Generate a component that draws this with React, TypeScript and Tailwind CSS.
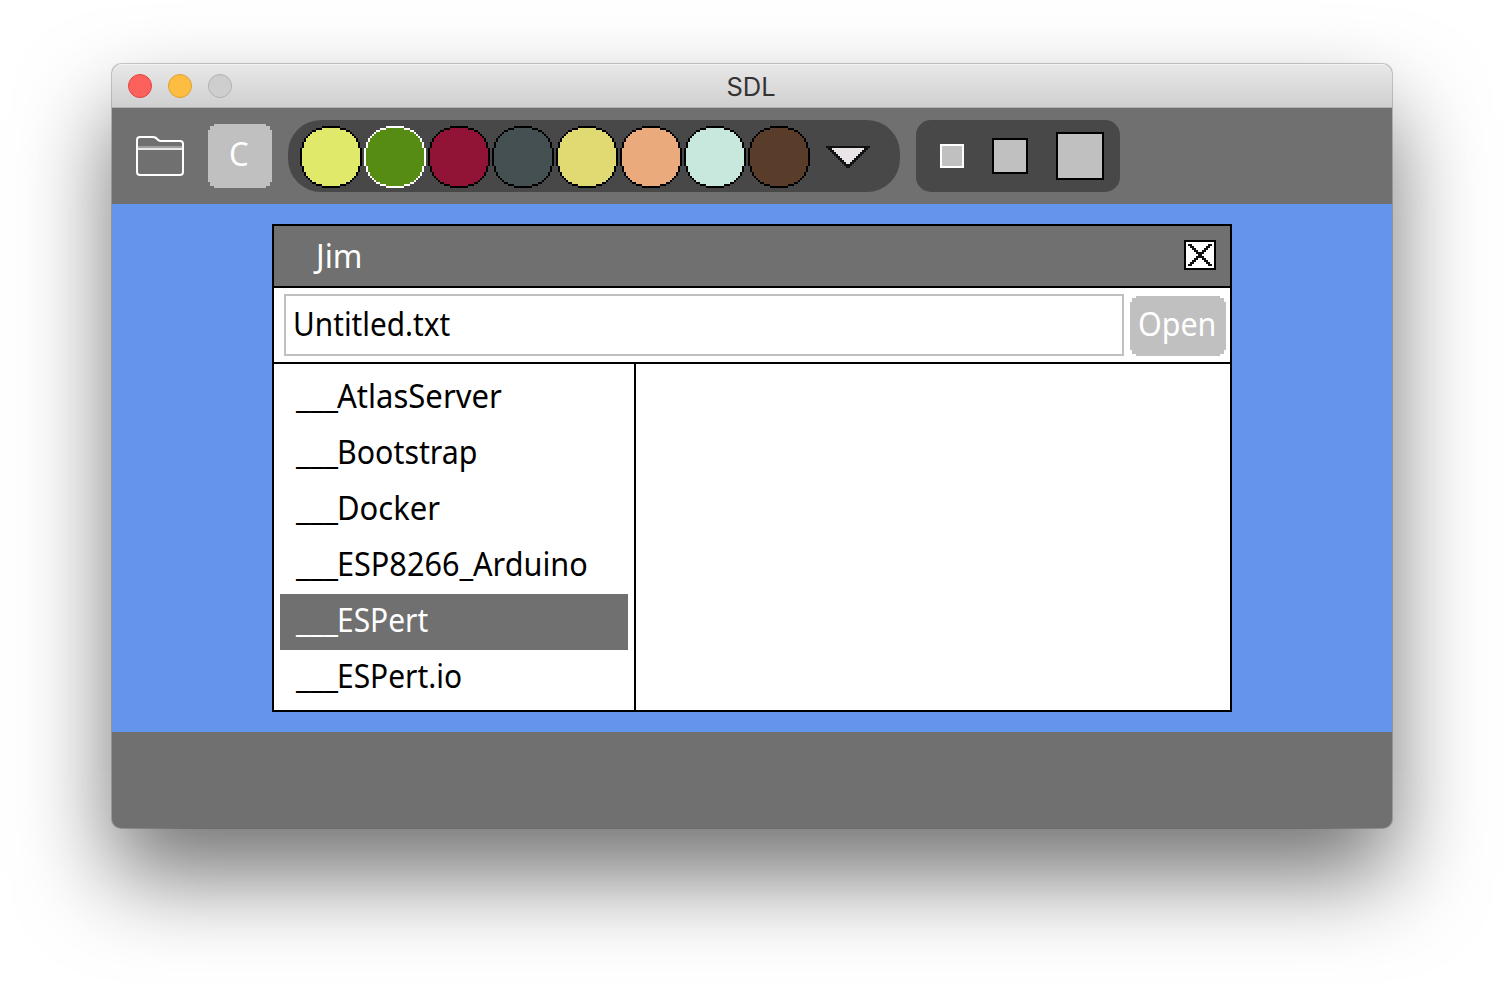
import React from "react";

const COLORS = ["#e0e96a", "#568c13", "#911436", "#445051", "#e1da73", "#eaaa7b", "#c8e8dd", "#593c2a"];

// First outline cell and outline length of each row in the upper half of a swatch.
const ROWS: [number, number][] = [
  [11, 9], [8, 3], [6, 2], [5, 1], [4, 1], [3, 1], [2, 1], [2, 1], [1, 1], [1, 1], [1, 1],
  [0, 1], [0, 1], [0, 1], [0, 1], [0, 1],
];

function Swatch({ color, selected }: { color: string; selected: boolean }) {
  const line = selected ? "#ffffff" : "#000000";
  return (
    <svg viewBox="0 0 31 31" className="size-[62px] shrink-0" shapeRendering="crispEdges">
      {Array.from({ length: 31 }, (_, y) => {
        const [start, len] = ROWS[Math.min(y, 30 - y)];
        return (
          <g key={y}>
            <rect x={start} y={y} width={31 - 2 * start} height={1} fill={line} />
            {y > 0 && y < 30 && (
              <rect x={start + len} y={y} width={31 - 2 * (start + len)} height={1} fill={color} />
            )}
          </g>
        );
      })}
    </svg>
  );
}

const FILES = [
  { name: "AtlasServer", scale: "scale-x-[0.97]" },
  { name: "Bootstrap", scale: "scale-x-[0.948]" },
  { name: "Docker", scale: "scale-x-[0.968]" },
  { name: "ESP8266_Arduino", scale: "scale-x-[0.957]" },
  { name: "ESPert", scale: "scale-x-[0.935]" },
  { name: "ESPert.io", scale: "scale-x-[0.935]" },
];

// Button corners stepped in 2px blocks.
const STEPPED =
  "[clip-path:polygon(6px_0,calc(100%-6px)_0,calc(100%-6px)_2px,calc(100%-2px)_2px,calc(100%-2px)_6px,100%_6px,100%_calc(100%-6px),calc(100%-2px)_calc(100%-6px),calc(100%-2px)_calc(100%-2px),calc(100%-6px)_calc(100%-2px),calc(100%-6px)_100%,6px_100%,6px_calc(100%-2px),2px_calc(100%-2px),2px_calc(100%-6px),0_calc(100%-6px),0_6px,2px_6px,2px_2px,6px_2px)]";

function Label({ scale = "scale-x-[0.93]", children }: { scale?: string; children: React.ReactNode }) {
  return <span className={`inline-block origin-left whitespace-pre ${scale}`}>{children}</span>;
}

export default function App() {
  return (
    <div className="h-[988px] w-[1504px] overflow-hidden bg-white px-28 pt-16 font-['Noto_Sans',sans-serif] text-[32px] leading-none">
      <div className="flex h-[764px] w-[1280px] flex-col overflow-hidden rounded-[9px] bg-[#707070] shadow-[0_0_0_1px_rgba(0,0,0,0.2),0_48px_92px_rgba(0,0,0,0.55)]">
        <header className="flex h-11 shrink-0 items-center border-b border-[#b0b0b0] bg-linear-to-b from-[#e8e8e8] to-[#d0d0d0] px-4 shadow-[inset_0_1px_0_#f4f4f4]">
          <div className="flex w-[120px] gap-4">
            <div className="size-6 rounded-full border border-[#e2453f] bg-[#fc615c]" />
            <div className="size-6 rounded-full border border-[#e0a033] bg-[#fdbd40]" />
            <div className="size-6 rounded-full border border-[#b1b1b1] bg-[#cecece]" />
          </div>
          <div className="flex-1 pt-[3px] pr-[122px] text-center font-['Inter',sans-serif] text-[25.5px] text-[#333333]">SDL</div>
        </header>

        <div className="flex h-24 shrink-0 items-start pt-3">
          <svg viewBox="0 0 48 40" className="mt-4 ml-6 h-10 w-12" fill="none">
            <path d="M1 36V4Q1 1 4 1H17Q20 1 22 4L24 5H44Q47 5 47 8V36Q47 39 44 39H4Q1 39 1 36Z" stroke="#fff" strokeWidth="2" />
            <path d="M2 11H46" stroke="#a0a0a0" strokeWidth="2" />
            <path d="M2 13H46" stroke="#e8e8e8" strokeWidth="2" />
          </svg>
          <button className={`mt-1 ml-6 flex size-16 items-center bg-[#c0c0c0] pb-1 pl-[21px] text-white ${STEPPED}`}>
            <Label scale="scale-x-[0.97]">C</Label>
          </button>
          <div className="ml-4 flex h-[72px] w-[612px] items-center gap-0.5 rounded-[33px] bg-[#484848] pt-0.5 pl-3">
            {COLORS.map((c, i) => (
              <Swatch key={c} color={c} selected={i === 1} />
            ))}
            <svg viewBox="0 0 22 11" className="ml-3.5 h-[22px] w-11" shapeRendering="crispEdges">
              <path d="M0 0H22V1H21V2H20V3H19V4H18V5H17V6H16V7H15V8H14V9H13V10H12V11H10V10H9V9H8V8H7V7H6V6H5V5H4V4H3V3H2V2H1V1H0Z" fill="#111" />
              <path d="M3 1H19V2H18V3H17V4H16V5H15V6H14V7H13V8H12V9H10V8H9V7H8V6H7V5H6V4H5V3H4V2H3Z" fill="#e8e4e8" />
            </svg>
          </div>
          <div className="ml-4 flex h-[72px] w-[204px] items-center rounded-[15px] bg-[#484848] pl-6">
            <div className="size-6 border-2 border-white bg-[#c0c0c0]" />
            <div className="ml-7 size-9 border-2 border-black bg-[#c0c0c0]" />
            <div className="ml-7 size-12 border-2 border-black bg-[#c0c0c0]" />
          </div>
        </div>

        <main className="h-[528px] shrink-0 bg-[#6495ed] px-40 py-5">
          <section className="flex h-[488px] flex-col border-2 border-black bg-white">
            <div className="flex h-[62px] shrink-0 items-center justify-between border-b-2 border-black bg-[#707070] pr-3.5 pl-[42px] text-white">
              <Label scale="scale-x-[0.99]">Jim</Label>
              <svg viewBox="0 0 16 15" className="mb-0.5 h-[30px] w-8" shapeRendering="crispEdges">
                <rect width="16" height="15" fill="#000" />
                <rect x="1" y="1" width="14" height="13" fill="#fff" />
                {Array.from({ length: 11 }, (_, i) => (
                  <g key={i} fill="#111">
                    <rect x={i + 2} y={i + 2} width="2" height="1" />
                    <rect x={12 - i} y={i + 2} width="2" height="1" />
                  </g>
                ))}
              </svg>
            </div>
            <div className="flex h-[76px] shrink-0 items-start border-b-2 border-black pt-1.5 pl-2.5">
              <div className="flex h-[62px] w-[840px] items-center border-2 border-[#c0c0c0] pb-0.5 pl-[7px]">
                <Label>Untitled.txt</Label>
              </div>
              <button className={`mt-0.5 ml-1.5 flex h-[60px] w-24 items-center bg-[#c0c0c0] pb-1 pl-2 text-white ${STEPPED}`}>
                <Label scale="scale-x-[0.95]">Open</Label>
              </button>
            </div>
            <div className="flex flex-1">
              <ul className="w-[362px] border-r-2 border-black px-1.5 pt-1.5">
                {FILES.map((f) => (
                  <li
                    key={f.name}
                    className={
                      f.name === "ESPert"
                        ? "flex h-14 items-center bg-[#707070] pb-1 pl-4 text-white"
                        : "flex h-14 items-center pb-1 pl-4 text-black"
                    }
                  >
                    <span className="w-[41px]"><Label scale="scale-x-[0.985]">___</Label></span>
                    <Label scale={f.scale}>{f.name}</Label>
                  </li>
                ))}
              </ul>
            </div>
          </section>
        </main>
      </div>
    </div>
  );
}
